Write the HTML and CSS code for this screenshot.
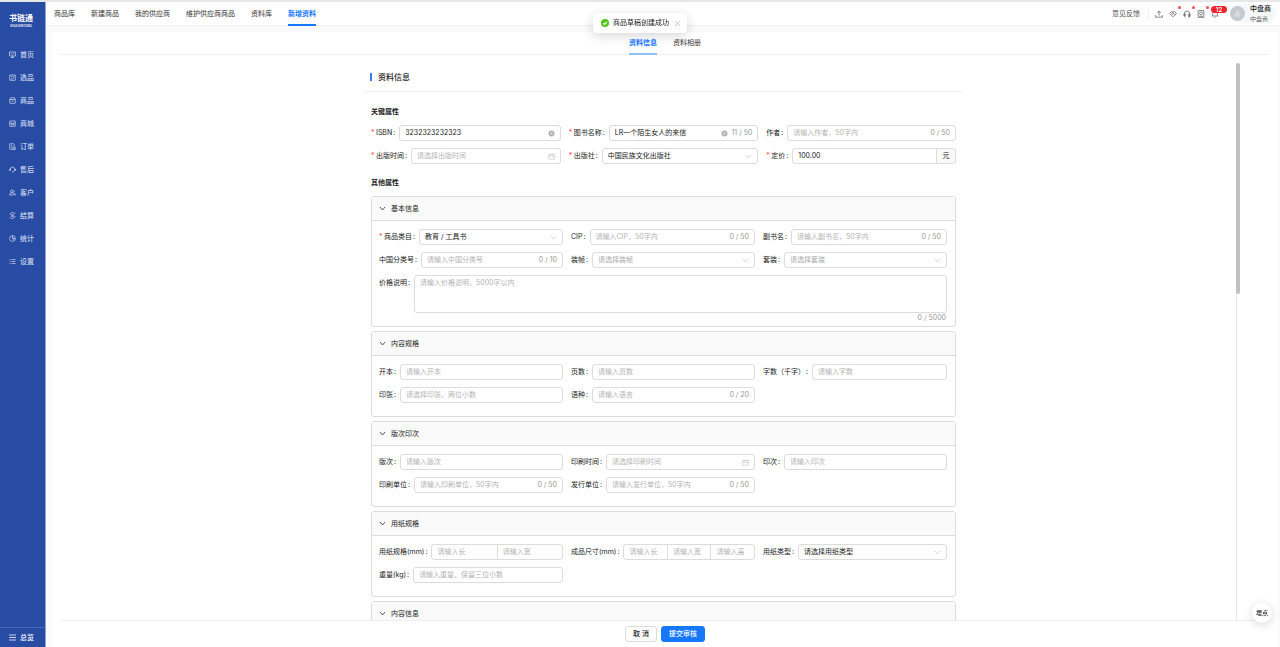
FILE: index.html
```html
<!DOCTYPE html>
<html lang="zh-CN">
<head>
<meta charset="utf-8">
<title>新增资料</title>
<link rel="stylesheet" href="styles.css">
</head>
<body>
<svg class="sprite" aria-hidden="true">
  <symbol id="i-down" viewBox="0 0 14 14"><path d="M2 4l5 6 5-6"/></symbol>
  <symbol id="i-cal" viewBox="0 0 14 14"><path d="M1.500 3h11v9.500h-11zM1.500 6.500h11M4.500 1v3M9.500 1v3"/></symbol>
  <symbol id="i-clear" viewBox="0 0 14 14"><circle cx="7" cy="7" r="6" fill="currentColor" stroke="none"/><path d="M4.800 4.800l4.400 4.400M9.200 4.800l-4.400 4.400" stroke="#fff" stroke-width="1.500"/></symbol>
</svg>
<div class="app">
  <aside class="side">
    <div class="logo"><span class="logo-name">书链通</span><span class="logo-sub">SHULIANTONG</span></div>
    <nav class="menu">
      <a href="#"><svg class="mi" viewBox="0 0 14 14"><path d="M1 2h12v8H1zM4 13h6M7 10v3M4 5l2.500 2.500L10 4"/></svg>首页</a>
      <a href="#"><svg class="mi" viewBox="0 0 14 14"><path d="M1.500 2h11v10.500h-11zM4 5h3M4 9l2 1.500L10 6M9 5h1.500"/></svg>选品</a>
      <a href="#"><svg class="mi" viewBox="0 0 14 14"><path d="M3 1.500h8l1.500 3v8h-11v-8zM1.500 5h11M5 8h4"/></svg>商品</a>
      <a href="#"><svg class="mi" viewBox="0 0 14 14"><path d="M1.500 2h11v10.500h-11zM1.500 6.500h11M5 6.500v2.500M9 6.500v2.500M4 9.500h6"/></svg>商城</a>
      <a href="#"><svg class="mi" viewBox="0 0 14 14"><path d="M9 12.500H1.500V1.500H9l1.500 2V6M4 5h2M4 8h3M8 8h4.500v5H8zM10 10h1"/></svg>订单</a>
      <a href="#"><svg class="mi" viewBox="0 0 14 14"><path d="M3 9V6a4 4 0 0 1 8 0v3l-3 3M3 6H1v3h2M11 6h2v3h-2M6 12h2"/></svg>售后</a>
      <a href="#"><svg class="mi" viewBox="0 0 14 14"><circle cx="5.500" cy="4.500" r="2.500"/><path d="M1 12c0-3 2-4.500 4.500-4.500S9 9 9 12zM9 2.500a2.500 2.500 0 0 1 0 4.500M10 8c2 .5 3 2 3 4h-2"/></svg>客户</a>
      <a href="#"><svg class="mi" viewBox="0 0 14 14"><path d="M2 6a5 5 0 0 1 9-3l2-1M12 8a5 5 0 0 1-9 3l-2 1M5 4l2 2.500L9 4M7 6.500V10M5 7h4M5 9h4"/></svg>结算</a>
      <a href="#"><svg class="mi" viewBox="0 0 14 14"><circle cx="7" cy="7" r="5.800"/><path d="M7 1.500V7l4 3M7 7h5"/></svg>统计</a>
      <a href="#"><svg class="mi" viewBox="0 0 14 14"><path d="M1 3h2M5 3h8M1 7h2M5 7h8M1 11h2M5 11h8"/></svg>设置</a>
    </nav>
    <a class="overview" href="#"><svg class="mi" viewBox="0 0 14 14"><path d="M0 2h14M0 7h14M0 12h14"/></svg>总览</a>
  </aside>

  <div class="page">
    <header class="top">
      <nav class="nav">
        <a href="#">商品库</a><a href="#">新建商品</a><a href="#">我的供应商</a><a href="#">维护供应商商品</a><a href="#">资料库</a><a href="#" class="on">新增资料</a>
      </nav>
      <div class="tools">
        <a class="feedback" href="#">意见反馈</a>
        <button class="tool" aria-label="上传"><svg viewBox="0 0 14 14"><path d="M7 10V2M4 5l3-3 3 3M1 9v3.500h12V9"/></svg></button>
        <button class="tool dot" aria-label="合作"><svg viewBox="0 0 14 14"><path d="M1 6l3.500-3.500L7 4l2.500-1.500L13 6l-6 6zM7 4L4.500 6.500 6 7.500l2-1.500 3 2.500"/></svg></button>
        <button class="tool dot" aria-label="客服"><svg viewBox="0 0 14 14"><path d="M2 10V7a5 5 0 0 1 10 0v3c0 2-1 3-3 3M2 7h2v4H2zM10 7h2v4h-2z"/></svg></button>
        <button class="tool dot" aria-label="应用"><svg viewBox="0 0 14 14"><path d="M2 1h10v12H2zM4 11h6"/><circle cx="7" cy="6" r="2.500"/></svg></button>
        <button class="tool" aria-label="通知"><svg viewBox="0 0 14 14"><path d="M3 10V6a4 4 0 0 1 8 0v4M1 10.500h12M6 13h2"/></svg><span class="badge">12</span></button>
        <div class="user">
          <span class="avatar"><svg viewBox="0 0 14 14"><circle cx="7" cy="4.500" r="2.500"/><path d="M2 12c0-3 2-4.500 5-4.500s5 1.500 5 4.500z"/></svg></span>
          <span class="who"><b>中盘商</b><small>中盘商</small></span>
        </div>
      </div>
    </header>

    <main class="panel">
      <div class="tabs"><button class="tab on">资料信息</button><button class="tab">资料相册</button></div>
      <div class="scroller">
        <form class="content" id="book">
          <h2 class="title">资料信息</h2>
          <div class="inner">
            <h3>关键属性</h3>
            <div class="rows">
              <div class="field"><label class="req" for="isbn">ISBN</label><div class="box"><input id="isbn" value="3232323232323"><svg class="ic"><use href="#i-clear"/></svg></div></div>
              <div class="field"><label class="req" for="name">图书名称</label><div class="box"><input id="name" value="LR一个陌生女人的来信"><svg class="ic"><use href="#i-clear"/></svg><span class="count">11 / 50</span></div></div>
              <div class="field"><label for="author">作者</label><div class="box"><input id="author" placeholder="请输入作者，50字内"><span class="count">0 / 50</span></div></div>
              <div class="field"><label class="req" for="pubdate">出版时间</label><div class="box"><input id="pubdate" placeholder="请选择出版时间"><svg class="ic"><use href="#i-cal"/></svg></div></div>
              <div class="field"><label class="req" for="press">出版社</label><div class="box"><select id="press"><option>中国民族文化出版社</option></select><svg class="ic"><use href="#i-down"/></svg></div></div>
              <div class="field"><label class="req" for="price">定价</label><div class="box"><input id="price" value="100.00"><span class="unit">元</span></div></div>
            </div>
            <h3>其他属性</h3>
            <div class="cards">
              <section class="card">
                <button type="button" class="head"><svg class="ar"><use href="#i-down"/></svg>基本信息</button>
                <div class="rows">
                  <div class="field"><label class="req" for="cat">商品类目</label><div class="box"><select id="cat"><option>教育 / 工具书</option></select><svg class="ic"><use href="#i-down"/></svg></div></div>
                  <div class="field"><label for="cip">CIP</label><div class="box"><input id="cip" placeholder="请输入CIP，50字内"><span class="count">0 / 50</span></div></div>
                  <div class="field"><label for="sub">副书名</label><div class="box"><input id="sub" placeholder="请输入副书名，50字内"><span class="count">0 / 50</span></div></div>
                  <div class="field"><label for="cls">中国分类号</label><div class="box"><input id="cls" placeholder="请输入中国分类号"><span class="count">0 / 10</span></div></div>
                  <div class="field"><label for="bind">装帧</label><div class="box"><select id="bind" class="empty"><option>请选择装帧</option></select><svg class="ic"><use href="#i-down"/></svg></div></div>
                  <div class="field"><label for="set">套装</label><div class="box"><select id="set" class="empty"><option>请选择套装</option></select><svg class="ic"><use href="#i-down"/></svg></div></div>
                  <div class="field wide"><label for="desc">价格说明</label><div class="area"><textarea id="desc" placeholder="请输入价格说明，5000字以内"></textarea><span class="count">0 / 5000</span></div></div>
                </div>
              </section>
              <section class="card">
                <button type="button" class="head"><svg class="ar"><use href="#i-down"/></svg>内容规格</button>
                <div class="rows">
                  <div class="field"><label for="fmt">开本</label><div class="box"><input id="fmt" placeholder="请输入开本"></div></div>
                  <div class="field"><label for="pages">页数</label><div class="box"><input id="pages" placeholder="请输入页数"></div></div>
                  <div class="field"><label for="words">字数（千字）</label><div class="box"><input id="words" placeholder="请输入字数"></div></div>
                  <div class="field"><label for="sheets">印张</label><div class="box"><input id="sheets" placeholder="请选择印张，两位小数"></div></div>
                  <div class="field"><label for="lang">语种</label><div class="box"><input id="lang" placeholder="请输入语言"><span class="count">0 / 20</span></div></div>
                </div>
              </section>
              <section class="card">
                <button type="button" class="head"><svg class="ar"><use href="#i-down"/></svg>版次印次</button>
                <div class="rows">
                  <div class="field"><label for="ed">版次</label><div class="box"><input id="ed" placeholder="请输入版次"></div></div>
                  <div class="field"><label for="pdate">印刷时间</label><div class="box"><input id="pdate" placeholder="请选择印刷时间"><svg class="ic"><use href="#i-cal"/></svg></div></div>
                  <div class="field"><label for="imp">印次</label><div class="box"><input id="imp" placeholder="请输入印次"></div></div>
                  <div class="field"><label for="printer">印刷单位</label><div class="box"><input id="printer" placeholder="请输入印刷单位，50字内"><span class="count">0 / 50</span></div></div>
                  <div class="field"><label for="issuer">发行单位</label><div class="box"><input id="issuer" placeholder="请输入发行单位，50字内"><span class="count">0 / 50</span></div></div>
                </div>
              </section>
              <section class="card">
                <button type="button" class="head"><svg class="ar"><use href="#i-down"/></svg>用纸规格</button>
                <div class="rows">
                  <div class="field"><label for="pl">用纸规格(mm)</label><div class="box split"><input id="pl" placeholder="请输入长"><input aria-label="用纸宽" placeholder="请输入宽"></div></div>
                  <div class="field"><label for="fl">成品尺寸(mm)</label><div class="box split"><input id="fl" placeholder="请输入长"><input aria-label="成品宽" placeholder="请输入宽"><input aria-label="成品高" placeholder="请输入高"></div></div>
                  <div class="field"><label for="ptype">用纸类型</label><div class="box"><select id="ptype"><option>请选择用纸类型</option></select><svg class="ic"><use href="#i-down"/></svg></div></div>
                  <div class="field"><label for="weight">重量(kg)</label><div class="box"><input id="weight" placeholder="请输入重量，保留三位小数"></div></div>
                </div>
              </section>
              <section class="card">
                <button type="button" class="head"><svg class="ar"><use href="#i-down"/></svg>内容信息</button>
              </section>
            </div>
          </div>
        </form>
        <div class="track"><div class="thumb"></div></div>
      </div>
      <footer class="foot"><button class="btn">取 消</button><button class="btn primary">提交审核</button></footer>
    </main>
  </div>
</div>
<div class="toast" role="status"><svg class="ok" viewBox="0 0 14 14"><circle cx="7" cy="7" r="7"/><path d="M4 7.200l2.200 2.300L10 5"/></svg>商品草稿创建成功<button aria-label="关闭"><svg viewBox="0 0 14 14"><path d="M2 2l10 10M12 2L2 12"/></svg></button></div>
<button class="float">埋点</button>
</body>
</html>
```
FILE: styles.css
```css
* { box-sizing: border-box; }
body {
  margin: 0;
  font: 7px/14px Inter, "Noto Sans CJK SC", sans-serif;
  color: #222;
  background: #fafafa;
}
a { color: inherit; text-decoration: none; }
button, input, select, textarea {
  font: inherit;
  color: inherit;
  margin: 0;
  padding: 0;
  border: 0;
  background: none;
  outline: 0;
}
button { cursor: pointer; }
h2, h3 { margin: 0; }
svg { fill: none; stroke: currentColor; flex: none; }
.sprite { display: none; }

.app {
  display: flex;
  height: 100vh;
  border-top: 2px solid #e6e8e8;
  overflow: hidden;
}

/* sidebar */
.side {
  display: flex;
  flex-direction: column;
  flex: none;
  width: 46px;
  background: #284ba3;
  border-right: 1px solid #8fa3d2;
  color: #c8d3ec;
  font-weight: 500;
}
.logo {
  display: flex;
  flex-direction: column;
  align-items: center;
  height: 41px;
  padding: 11px 3px 0 0;
  color: #fff;
}
.logo-name { font-size: 8px; line-height: 11px; font-weight: 700; }
.logo-sub { font-size: 3px; line-height: 4px; font-weight: 600; }
.menu { display: flex; flex-direction: column; flex: 1; }
.menu a, .overview { display: flex; align-items: center; gap: 4px; height: 23px; padding-left: 9px; }
.mi { width: 7px; height: 7px; stroke-width: 1.5; }
.overview { height: 20px; border-top: 1px solid #4867b3; color: #fff; }

/* header */
.page { display: flex; flex-direction: column; flex: 1; min-width: 0; }
.top {
  display: flex;
  justify-content: space-between;
  height: 24px;
  padding: 0 4px 0 8px;
  background: #fff;
  border-bottom: 1px solid #f0f0f0;
}
.nav { display: flex; gap: 16px; color: #333; }
.nav a { height: 24px; line-height: 23px; }
.nav .on { color: #1677ff; font-weight: 700; border-bottom: 2px solid #1677ff; }
.tools { display: flex; align-items: center; gap: 6px; }
.feedback { padding-right: 8px; border-right: 1px solid #f0f0f0; color: #555; line-height: 10px; }
.tool { position: relative; display: flex; width: 8px; height: 8px; color: #333; }
.tool svg { width: 8px; height: 8px; }
.dot::after {
  content: "";
  position: absolute;
  top: -4px;
  right: -4px;
  width: 3px;
  height: 3px;
  border-radius: 50%;
  background: #ff4d4f;
}
.badge {
  position: absolute;
  left: 0;
  top: -7px;
  width: 16px;
  margin-top: 3px;
  border-radius: 4px;
  background: #f5222d;
  color: #fff;
  font-size: 6px;
  line-height: 7px;
  font-weight: 600;
  text-align: center;
}
.user {
  display: flex;
  align-items: center;
  gap: 5px;
  height: 19px;
  margin-left: 5px;
  padding-right: 5px;
  border-radius: 10px;
  background: #f7f8fa;
}
.avatar {
  display: flex;
  align-items: center;
  justify-content: center;
  width: 15px;
  height: 15px;
  border-radius: 50%;
  background: #c5cad3;
  color: #fff;
}
.avatar svg { width: 7px; height: 7px; }
.who { display: flex; flex-direction: column; line-height: 10px; }
.who b { font-weight: 500; }
.who small { font-size: 6px; line-height: 9px; color: #666; }

/* panel */
.panel {
  display: flex;
  flex-direction: column;
  flex: 1;
  min-height: 0;
  margin: 6px 2px 0 6px;
  background: #fff;
}
.tabs {
  display: flex;
  flex: none;
  justify-content: center;
  gap: 16px;
  height: 23px;
  margin: 0 8px;
  border-bottom: 1px solid #f0f0f0;
}
.tab { height: 23px; border-bottom: 2px solid transparent; color: #333; }
.tab.on { color: #1677ff; font-weight: 700; border-color: #91c0ff; }
.scroller { display: flex; flex: 1; min-height: 0; margin: 0 38px 0 39px; overflow: hidden; }
.content { width: 597px; margin: 0 auto; }
.title {
  position: relative;
  margin-bottom: 1px;
  padding: 14px 13px 6px;
  border-bottom: 1px solid #f0f0f0;
  font-size: 8px;
  line-height: 16px;
  font-weight: 500;
}
.title::before { content: ""; position: absolute; left: 5px; top: 18px; width: 2px; height: 8px; background: #3a7df0; }
.inner { padding: 0 6px; }
h3 { padding: 12px 0 6px; font-size: 7px; line-height: 14px; font-weight: 700; }
.track { flex: none; width: 4px; margin-top: 8px; border-left: 1px solid #e8e8e8; }
.thumb { width: 4px; height: 231px; margin-left: -1px; border-radius: 2px; background: #c1c1c1; }

/* fields */
.rows { display: grid; grid-template-columns: repeat(3, 1fr); gap: 7px 8px; }
.field { display: flex; min-width: 0; }
.wide { grid-column: 1 / -1; }
label { flex: none; line-height: 16px; padding-right: 4px; }
label::after { content: ":"; margin-left: 1px; }
.req::before { content: "*"; display: inline-block; width: 5px; color: #ff4d4f; }
.box {
  display: flex;
  align-items: center;
  flex: 1;
  min-width: 0;
  height: 16px;
  border: 1px solid #dcdcdc;
  border-radius: 3px;
  background: #fff;
}
.box input, .box select { flex: 1; min-width: 0; height: 14px; padding-left: 5px; appearance: none; }
::placeholder { color: #b4b4b4; opacity: 1; }
.box .empty { color: #aaa; }
.ic { width: 7px; height: 7px; margin: 0 5px 0 4px; color: #b0b0b0; }
.ic + .count { margin-left: -1px; }
.count { color: #999; padding-right: 5px; }
.unit {
  width: 19px;
  border-left: 1px solid #dcdcdc;
  border-radius: 0 2px 2px 0;
  background: #fafafa;
  text-align: center;
}
.split input + input { border-left: 1px solid #dcdcdc; }
.area { display: flex; flex-direction: column; flex: 1; text-align: right; }
textarea {
  display: block;
  height: 38px;
  padding: 0 5px;
  border: 1px solid #dcdcdc;
  border-radius: 3px;
  resize: none;
}
.area .count { line-height: 9px; padding-right: 1px; }

/* cards */
.cards { display: flex; flex-direction: column; gap: 4px; }
.card { border: 1px solid #dcdcdc; border-radius: 3px; }
.card .rows { padding: 8px 8px 13px 7px; }
.card:first-child .rows { padding-bottom: 4px; }
.head {
  display: flex;
  align-items: center;
  gap: 5px;
  width: 100%;
  height: 24px;
  padding-left: 7px;
  border-bottom: 1px solid #dcdcdc;
  background: #fafafa;
}
.ar { width: 7px; height: 7px; stroke-width: 1.5; }

/* footer */
.foot {
  display: flex;
  flex: none;
  justify-content: center;
  gap: 4px;
  height: 27px;
  margin: 0 8px;
  padding-top: 5px;
  border-top: 1px solid #f0f0f0;
}
.btn { height: 16px; padding: 0 7px; border: 1px solid #dcdcdc; border-radius: 3px; font-weight: 500; }
.primary { border-color: #1677ff; background: #1677ff; color: #fff; }

.toast {
  position: fixed;
  top: 13px;
  left: 50%;
  display: flex;
  align-items: center;
  gap: 4px;
  height: 20px;
  padding: 0 6px 0 8px;
  border-radius: 4px;
  background: #fff;
  box-shadow: 0 3px 12px rgba(0, 0, 0, .16);
  transform: translateX(-50%);
  white-space: nowrap;
}
.toast svg { display: block; width: 8px; height: 8px; }
.toast .ok circle { fill: #52c41a; stroke: none; }
.toast .ok path { stroke: #fff; stroke-width: 2; }
.toast button { margin-left: 1px; color: #999; }
.toast button svg { width: 7px; height: 7px; }
.float {
  position: fixed;
  right: 8px;
  bottom: 24px;
  width: 20px;
  height: 20px;
  border-radius: 50%;
  background: #fff;
  font-size: 6px;
  font-weight: 500;
  box-shadow: 0 2px 10px rgba(0, 0, 0, .16);
}
```
